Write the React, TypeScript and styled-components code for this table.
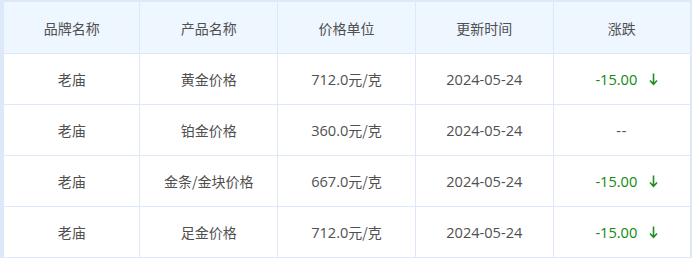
import styled, { createGlobalStyle } from 'styled-components';

const GlobalStyle = createGlobalStyle`
  html, body {
    margin: 0;
    padding: 0;
    background: #ffffff;
  }
  body {
    font-family: "Noto Sans CJK SC", "Noto Sans", sans-serif;
  }
`;

const Wrapper = styled.div`
  width: 696px;
  height: 260px;
  overflow: hidden;
  background: #ffffff;
`;

const Table = styled.table`
  width: 692px;
  border-collapse: collapse;
  table-layout: fixed;
  border-top: 2px solid #dde9f8;
  border-left: 4px solid #dde9f8;
  border-right: 2px solid #dde9f8;
  font-size: 14px;
  color: #505050;
`;

const HeadCell = styled.th`
  height: 51px;
  padding: 0;
  font-weight: 400;
  text-align: center;
  background: #eef6ff;
  border: 1px solid #dde9f8;
  color: #505050;
`;

const Cell = styled.td`
  height: 50px;
  padding: 0;
  text-align: center;
  border: 1px solid #dde9f8;
`;

const Num = styled.span`
  font-family: "Open Sans", "Noto Sans CJK SC", sans-serif;
  font-size: 14.6px;
`;

const Change = styled.span<{ $down?: boolean }>`
  display: inline-flex;
  align-items: center;
  color: ${({ $down }) => ($down ? '#0e8a0e' : '#505050')};
  font-family: "Open Sans", sans-serif;
  font-size: 14.6px;
  letter-spacing: ${({ $down }) => ($down ? '0' : '1px')};
  margin-left: ${({ $down }) => ($down ? '10px' : '0')};
`;

const Arrow = styled.svg`
  margin-left: 12px;
  width: 9px;
  height: 14px;
`;

interface PriceRow {
  brand: string;
  product: string;
  price: string;
  date: string;
  change: string | null;
}

const rows: PriceRow[] = [
  { brand: '老庙', product: '黄金价格', price: '712.0', date: '2024-05-24', change: '-15.00' },
  { brand: '老庙', product: '铂金价格', price: '360.0', date: '2024-05-24', change: null },
  { brand: '老庙', product: '金条/金块价格', price: '667.0', date: '2024-05-24', change: '-15.00' },
  { brand: '老庙', product: '足金价格', price: '712.0', date: '2024-05-24', change: '-15.00' },
];

function DownArrow() {
  return (
    <Arrow viewBox="0 0 9 14">
      <path d="M4.5 1.5v10.5M1 8.5l3.5 3.8 3.5-3.8" stroke="#1f8f1f" strokeWidth="1.6" fill="none" />
    </Arrow>
  );
}

export default function App() {
  return (
    <Wrapper>
      <GlobalStyle />
      <Table>
        <thead>
          <tr>
            <HeadCell>品牌名称</HeadCell>
            <HeadCell>产品名称</HeadCell>
            <HeadCell>价格单位</HeadCell>
            <HeadCell>更新时间</HeadCell>
            <HeadCell>涨跌</HeadCell>
          </tr>
        </thead>
        <tbody>
          {rows.map((r, i) => (
            <tr key={i}>
              <Cell>{r.brand}</Cell>
              <Cell>{r.product}</Cell>
              <Cell>
                <Num>{r.price}</Num>元/克
              </Cell>
              <Cell>
                <Num>{r.date}</Num>
              </Cell>
              <Cell>
                {r.change ? (
                  <Change $down>
                    {r.change}
                    <DownArrow />
                  </Change>
                ) : (
                  <Change>--</Change>
                )}
              </Cell>
            </tr>
          ))}
        </tbody>
      </Table>
    </Wrapper>
  );
}
